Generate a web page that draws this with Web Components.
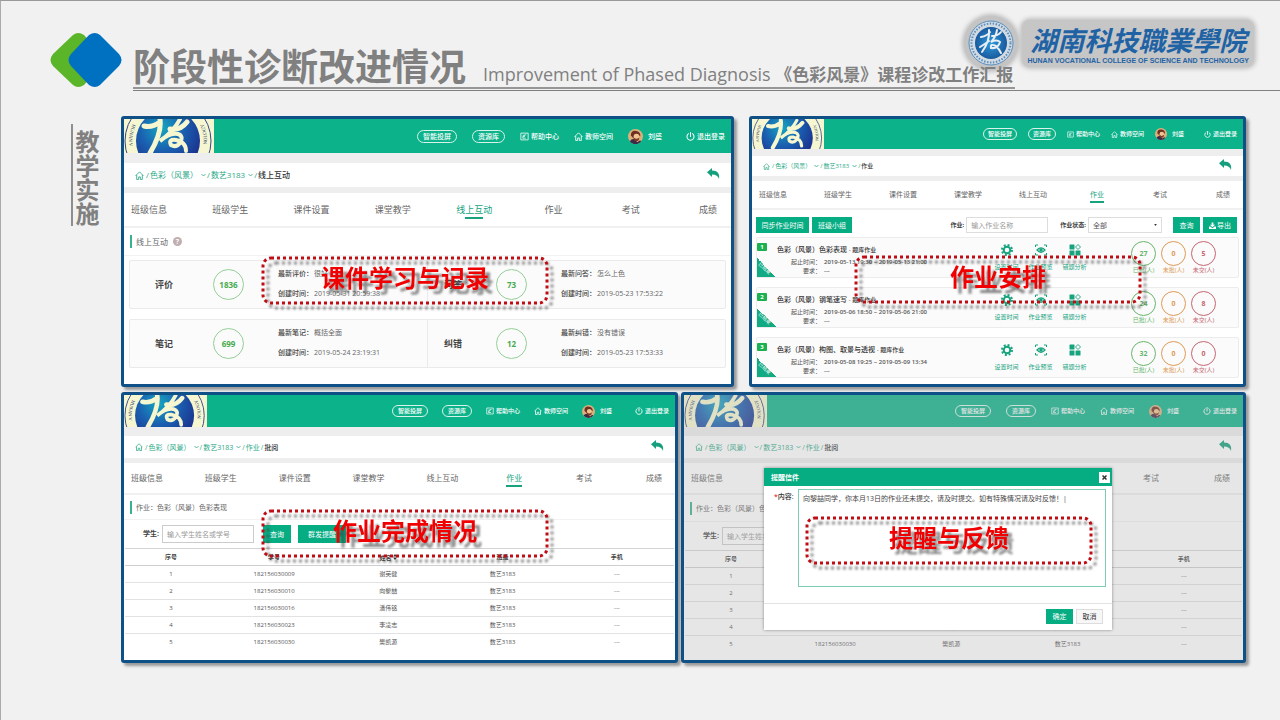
<!DOCTYPE html>
<html lang="zh-CN">
<head>
<meta charset="utf-8">
<title>阶段性诊断改进情况</title>
<style>
  body {
    margin: 0;
    font-family: "Open Sans", "Noto Sans CJK SC", sans-serif;
    color: #555;
    background: #f1f1f1;
  }
</style>
</head>
<body>
<phase-slide></phase-slide>
<script>
const RESET = `
  *, *::before, *::after { box-sizing: border-box; }
  a { color: inherit; text-decoration: none; }
  button, input, select, textarea { font: inherit; color: inherit; margin: 0; padding: 0; border: 0; border-radius: 0; outline: 0; }
  svg { display: block; flex: none; }
`;

function define(name, css, render) {
  customElements.define(name, class extends HTMLElement {
    constructor() {
      super();
      this.attachShadow({ mode: 'open' });
    }
    connectedCallback() {
      const t = document.createElement('template');
      t.innerHTML = `<style>${RESET}${css}</style>${render(this)}`;
      this.shadowRoot.replaceChildren(t.content.cloneNode(true));
    }
  });
}

const HOME = `<svg class="ic" viewBox="0 0 16 16" fill="none" stroke="currentColor" stroke-width="1.5"><path d="M1 8.500 8 1.500l7 7M3 7v8h3.500v-4.500h3V15H13V7"/></svg>`;
const CHEVRON = `<svg class="chev" viewBox="0 0 10 8" fill="none" stroke="currentColor" stroke-width="1.6"><path d="M1 2l4 4 4-4"/></svg>`;

/* ---------- title strip ---------- */

define('brand-mark', `:host { display: block; } svg { width: 72px; height: 56px; }`, () => `
  <svg viewBox="0 0 72 56" aria-hidden="true">
    <path fill="#5ab528" d="M23 3Q28-1 34 3L51 22Q56 28 51 34L34 53Q28 57 23 53L3 34Q-2 28 3 22Z"/>
    <path fill="#0070c0" d="M39 3Q45-1 50 3L69 22Q74 28 69 34L50 53Q45 57 39 53L21 34Q16 28 21 22Z"/>
  </svg>`);

define('college-logo', `
  :host { display: flex; align-items: center; gap: 4px; color: #1f63a5; }
  .seal { width: 54px; height: 54px; border-radius: 50%; background: #c4c4c4; box-shadow: 0 0 4px 2px #bdbdbd; padding: 4px; }
  .seal svg { width: 46px; height: 46px; }
  .name { display: flex; flex-direction: column; align-items: center; padding: 4px 5px 1px; border-radius: 8px; background: #c6c6c6; box-shadow: 0 0 4px 2px #c0c0c0; white-space: nowrap; }
  .zh { font: italic 700 27px/32px "Noto Sans CJK SC", sans-serif; }
  .en { font: 700 7px/10px "Liberation Sans", sans-serif; }
`, () => `
  <div class="seal"><svg viewBox="0 0 46 46" aria-hidden="true">
    <defs><radialGradient id="g"><stop offset="0" stop-color="#2b9bdc"/><stop offset="1" stop-color="#1a5a9e"/></radialGradient></defs>
    <circle cx="23" cy="23" r="22" fill="#d3dbe2" stroke="#5b8fc0" stroke-width="1"/>
    <circle cx="23" cy="23" r="19.500" fill="none" stroke="#5b8fc0" stroke-width="2" stroke-dasharray="1.500 1.500"/>
    <circle cx="23" cy="23" r="16" fill="url(#g)"/>
    <path fill="none" stroke="#e8eef3" stroke-width="2" stroke-linecap="round" d="M13 17q6-1 9-5M21 10q1 11-7 22M12 27q5-3 9-6M24 16q6 0 9-4M29 10q-1 7-6 12q6-3 9 0q-2 7-9 6q-1-5 5-2q3 3 5 7"/>
  </svg></div>
  <div class="name"><span class="zh">湖南科技職業學院</span><span class="en">HUNAN VOCATIONAL COLLEGE OF SCIENCE AND TECHNOLOGY</span></div>`);

define('slide-header', `
  :host { display: flex; position: relative; gap: 11px; padding: 32px 0 0 50px; height: 91px; color: #808080; }
  .rule { flex: 1; display: flex; align-items: flex-end; border-bottom: 1px solid #808080; padding-bottom: 1px; }
  .titles { display: flex; align-items: baseline; gap: 17px; border-bottom: 2px solid #969696; white-space: nowrap; line-height: 24px; position: relative; z-index: 1; padding-right: 2px; }
  h1 { margin: 0; font-size: 37px; font-weight: 700; line-height: 24px; }
  p { margin: 0; font-size: 18px; }
  b { font-size: 17px; }
  college-logo { position: absolute; top: 16px; right: 26px; }
`, () => `
  <brand-mark></brand-mark>
  <div class="rule"><div class="titles"><h1>阶段性诊断改进情况</h1><p>Improvement of Phased Diagnosis <b>《色彩风景》课程诊改工作汇报</b></p></div></div>
  <college-logo></college-logo>`);

define('side-title', `
  :host { display: block; border-left: 2px solid #8e8e8e; padding: 6px 0 0; }
  h2 { margin: 0; writing-mode: vertical-rl; font-size: 24px; line-height: 26px; font-weight: 700; color: #808080; }
`, () => `<h2><slot></slot></h2>`);

/* ---------- screenshot frame ---------- */

define('shot-frame', `
  :host { display: flex; flex-direction: column; position: relative; min-width: 0; min-height: 271px; border: 3px solid #0f5087; border-radius: 3px; background: #fff; box-shadow: 3px 3px 3px #999; line-height: 1; }
  :host([dimmed])::after { content: ""; position: absolute; inset: 0; background: rgba(174, 174, 174, .31); }
`, () => `<slot></slot>`);

define('app-header', `
  :host { display: flex; align-items: center; height: var(--bar-h); background: #0cb38a; color: #fff; font-size: var(--nav-fs); font-weight: 500; padding-right: 6px; }
  .seal { width: var(--seal-w); height: var(--bar-h); margin-right: auto; background: #f6f7d0; }
  nav { display: flex; align-items: center; gap: var(--nav-gap); white-space: nowrap; }
  .pill { border: 1px solid #d8f3ea; border-radius: 9px; padding: 2px var(--pill-pad); }
  a { display: flex; align-items: center; gap: 2px; }
  .ic { width: var(--nav-ic); height: var(--nav-ic); }
  .user { gap: 5px; margin-right: 9px; }
  .face { width: var(--face); height: var(--face); }
`, () => `
  <svg class="seal" viewBox="0 0 90 34" aria-hidden="true">
    <defs>
      <radialGradient id="g" cx=".4" cy=".3" r=".7"><stop offset="0" stop-color="#16a6c0"/><stop offset=".5" stop-color="#1a5fb0"/><stop offset="1" stop-color="#1c2f8c"/></radialGradient>
      <path id="ring" d="M11.800 0A39 39 0 1 0 76.200 0"/>
    </defs>
    <circle cx="44" cy="22" r="43" fill="#f6f7d0" stroke="#31458e" stroke-width="1"/>
    <circle cx="44" cy="22" r="32" fill="url(#g)"/>
    <g font-family="Liberation Serif" font-size="5" fill="#27346f">
      <text><textPath href="#ring" startOffset="6">HUNAN V</textPath></text>
      <text><textPath href="#ring" startOffset="142">NOLOGY</textPath></text>
    </g>
    <g fill="none" stroke="#f6f7d0" stroke-linecap="round">
      <path stroke-width="5" d="M20 7q8 2 16-4M36 0q2 14-10 34M46 10q10 2 17-7"/>
      <path stroke-width="4" d="M56 0q-6 12-20 22q10-9 18-7q6 2 2 9q-4 5-9 2q-3-6 5-5q10 2 10 11"/>
    </g>
  </svg>
  <nav>
    <a class="pill" href="#">智能投屏</a>
    <a class="pill" href="#">资源库</a>
    <a href="#"><svg class="ic" viewBox="0 0 16 16" fill="none" stroke="currentColor" stroke-width="1.4"><path d="M1.500 2h13v12h-13zM5 6h3v2H5v3h5M8 5h3"/></svg>帮助中心</a>
    <a href="#">${HOME}教师空间</a>
    <a class="user" href="#"><svg class="face" viewBox="0 0 16 16"><circle cx="8" cy="8" r="8" fill="#dcb07c"/><path fill="#6f2e22" d="M3 7q0-6 6-5q5 1 4 6l-2-2-4 0-1 4z"/><path fill="#3c2a4a" d="M2 13q2-3 5-2l3 3q3-3 4-1q-2 3-6 3T2 13z"/><circle cx="9" cy="8" r="3" fill="#f0c491"/><path fill="#7b3a24" d="M6 9q3 3 6 0q0 4-3 4T6 9z"/></svg>刘盛</a>
    <a href="#"><svg class="ic" viewBox="0 0 16 16" fill="none" stroke="currentColor" stroke-width="1.8" stroke-linecap="round"><path d="M8 1v7M4.500 3a6.300 6.300 0 1 0 7 0"/></svg>退出登录</a>
  </nav>`);

define('crumb-bar', `
  :host { display: flex; align-items: center; justify-content: space-between; height: var(--crumb-h); margin: var(--gap-a) 0 0; padding: 0 11px; background: #fff; font-size: var(--crumb-fs); color: #2ba987; box-shadow: 0 calc(-1 * var(--gap-a)) 0 #eee; }
  nav { display: flex; align-items: center; gap: 1px; white-space: nowrap; }
  .ic { width: var(--home-ic); height: var(--home-ic); margin-right: 1px; }
  .chev { width: 5px; height: 4px; margin-left: 2px; }
  .now { color: #333; font-weight: 500; }
  button { background: none; color: #14a07c; margin-top: -4px; }
  .back { width: 13px; height: 11px; }
`, el => {
  const trail = (el.getAttribute('trail') || '').split(',').filter(Boolean);
  return `
  <nav aria-label="面包屑"><a href="#">${HOME}</a>/<a href="#">色彩（风景）</a>${CHEVRON}/<a href="#">数艺3183</a>${CHEVRON}/
    ${trail.map(t => `<a href="#">${t}</a>/`).join('')}<span class="now">${el.getAttribute('now')}</span></nav>
  <button type="button" aria-label="返回"><svg class="back" viewBox="0 0 26 22"><path fill="currentColor" d="M0 8.500 10 0v5c11 0 16 6 14 17-2-6-6-9-14-9v5z"/></svg></button>`;
});

define('tab-nav', `
  :host { display: block; border-top: var(--gap-b) solid #eee; border-bottom: 2px solid #f0f0f0; background: #fff; }
  nav { display: flex; justify-content: space-between; align-items: center; height: var(--tab-h); padding: 0 7px; font-size: var(--tab-fs); color: #666; white-space: nowrap; }
  a { position: relative; }
  .short { margin: 0 var(--tab-short); }
  .on { color: #16a37e; }
  .on::after { content: ""; position: absolute; left: 0; right: 0; bottom: -5px; height: 2px; background: #16a37e; }
  .on:not(.short)::after { left: 25%; right: 25%; }
`, el => `<nav>${['班级信息', '班级学生', '课件设置', '课堂教学', '线上互动', '作业', '考试', '成绩'].map(t =>
  `<a href="#" class="${t.length === 2 ? 'short' : ''} ${t === el.getAttribute('active') ? 'on' : ''}">${t}</a>`).join('')}</nav>`);

define('section-title', `
  :host { display: flex; align-items: center; height: var(--sec-h); padding-left: 6px; font-size: var(--crumb-fs); color: #666; white-space: nowrap; border-bottom: 1px solid #f2f2f2; }
  h3 { margin: 0; font-size: inherit; font-weight: 400; border-left: 2px solid #38b292; padding-left: 4px; line-height: 13px; }
  .q { margin-left: 5px; width: 9px; height: 9px; border-radius: 50%; background: #c0aeb0; color: #fff; font-size: 7px; line-height: 9px; font-weight: 700; text-align: center; }
`, el => `<h3><slot></slot></h3>${el.hasAttribute('help') ? '<span class="q">?</span>' : ''}`);

/* ---------- interaction statistics ---------- */

define('stat-card', `
  :host { display: grid; grid-template-columns: 298fr 299fr; height: 49px; margin: 0 5px; border: 1px solid #eaeaea; border-radius: 2px; background: #fbfbfb; font-size: 7px; white-space: nowrap; }
  section { display: flex; align-items: center; padding-left: 25px; }
  section + section { padding-left: 16px; border-left: 1px solid #eaeaea; }
  h4 { margin: 0; width: 58px; font-size: 9px; font-weight: 700; color: #444; }
  section + section h4 { width: 52px; }
  .n { width: 31px; height: 31px; border: 1px solid #95cf98; border-radius: 50%; display: grid; place-items: center; color: #47ab4d; font-weight: 700; font-size: 8px; margin-right: 34px; }
  dl { margin: 0; display: grid; grid-template-columns: 36px auto; row-gap: 12px; line-height: 8px; padding-bottom: 1px; color: #666; }
  dt { font-weight: 500; color: #444; } dd { margin: 0; }
`, el => {
  const half = s => { const [k, n, v, d] = s.split('|');
    return `<section><h4>${k}</h4><span class="n">${n}</span><dl><dt>最新${k}：</dt><dd>${v}</dd><dt>创建时间：</dt><dd>${d}</dd></dl></section>`; };
  return half(el.getAttribute('left')) + half(el.getAttribute('right'));
});

/* ---------- homework list ---------- */

define('work-toolbar', `
  :host { display: flex; align-items: center; height: 16px; margin: 7px 6px 4px 4px; font-size: 7px; white-space: nowrap; }
  button { height: 16px; background: #06ad83; color: #fff; padding: 0 5px; margin-right: 3px; display: flex; align-items: center; justify-content: center; gap: 1px; }
  .wide { width: 53px; } .mid { width: 40px; } .small { width: 27px; } .out { width: 34px; margin-right: 0; }
  label { font-weight: 700; font-size: 6px; color: #444; margin-right: 2px; }
  label:first-of-type { margin-left: auto; }
  input, .pick { height: 16px; border: 1px solid #ddd; background: #fff; padding: 0 4px; }
  input { width: 82px; margin-right: 12px; } input::placeholder { color: #999; opacity: 1; }
  .pick { width: 74px; margin-right: 11px; display: flex; align-items: center; }
  select { flex: 1; appearance: none; background: none; } .pick svg { width: 3px; height: 2px; }
  .dl { width: 7px; height: 7px; }
`, () => `
  <button class="wide" type="button">同步作业时间</button><button class="mid" type="button">班级小组</button>
  <label for="w">作业:</label><input id="w" placeholder="输入作业名称">
  <label for="s">作业状态:</label><span class="pick"><select id="s"><option>全部</option></select><svg viewBox="0 0 4 3"><path d="M0 0h4L2 3z" fill="#333"/></svg></span>
  <button class="small" type="button">查询</button><button class="out" type="button"><svg class="dl" viewBox="0 0 16 16" fill="#fff"><path d="M6 1h4v5h4L8 12 2 6h4zM0 10h3l5 4 5-4h3v6H0z"/></svg>导出</button>`);

define('work-item', `
  :host { display: flex; position: relative; height: 41px; margin: 0 4px 9px; border: 1px solid #ececec; border-radius: 2px; background: #fbfbfb; font-size: 6px; white-space: nowrap; }
  .no { width: 10px; height: 8px; margin-top: 5px; background: #1cb050; border-radius: 1px; color: #fff; font-weight: 700; line-height: 8px; text-align: center; }
  .flag { position: absolute; left: 0; bottom: 0; width: 19px; height: 19px; background: linear-gradient(45deg, #12aa82 50%, transparent 50%); }
  .flag span { position: absolute; left: -2px; top: 8px; width: 19px; text-align: center; font-size: 5px; color: #fff; transform: rotate(45deg); }
  .info { margin: 8px auto 0 10px; }
  h4 { margin: 0 0 4px; font-size: 7px; line-height: 8px; font-weight: 500; color: #333; } h4 small { font-size: 6px; }
  dl { margin: 0; display: grid; grid-template-columns: 44px auto; column-gap: 3px; line-height: 9px; color: #555; }
  dt { text-align: right; } dd { margin: 0; font-weight: 600; }
  .acts { display: flex; gap: 9px; margin: 6px 44px 0 0; color: #16a37e; }
  .acts a { width: 25px; display: flex; flex-direction: column; align-items: center; gap: 8px; }
  .acts svg { width: 12px; height: 12px; }
  .cnt { display: flex; gap: 5px; margin: 3px 22px 0 0; }
  .cnt div { width: 25px; text-align: center; }
  .cnt b { display: block; width: 25px; height: 25px; line-height: 24px; border: 1px solid currentColor; border-radius: 50%; margin-bottom: 1px; font-size: 7px; }
  .g { color: #69b56c; } .o { color: #dd9a55; } .r { color: #c56570; }
`, el => {
  const g = k => el.getAttribute(k);
  return `
  <span class="no">${g('no')}</span><span class="flag"><span>已结束</span></span>
  <div class="info"><h4>${g('name')} <small>- 题库作业</small></h4>
    <dl><dt>起止时间：</dt><dd>${g('time')}</dd><dt>要求：</dt><dd>---</dd></dl></div>
  <div class="acts">
    <a href="#"><svg viewBox="0 0 24 24" fill="none" stroke="currentColor"><circle cx="12" cy="12" r="6.500" stroke-width="4"/><circle cx="12" cy="12" r="10" stroke-width="4" stroke-dasharray="4 3.850"/></svg>设置时间</a>
    <a href="#"><svg viewBox="0 0 24 24" fill="none" stroke="currentColor" stroke-width="2"><path d="M1 6V2h5M18 2h5v4M1 18v4h5M18 22h5v-4"/><path d="M4 12q8-9 16 0q-8 9-16 0z" stroke-width="2.500"/><circle cx="12" cy="12" r="2.500" fill="currentColor"/></svg>作业预览</a>
    <a href="#"><svg viewBox="0 0 24 24" fill="currentColor"><rect x="1" y="1" width="10" height="10" rx="1"/><rect x="1" y="13" width="10" height="10" rx="1"/><rect x="13" y="13" width="10" height="10" rx="1"/><path d="M18 1l5 5-5 5-5-5z" fill="none" stroke="currentColor" stroke-width="1.800"/></svg>错题分析</a>
  </div>
  <div class="cnt"><div class="g"><b>${g('done')}</b>已批(人)</div><div class="o"><b>${g('todo')}</b>未批(人)</div><div class="r"><b>${g('miss')}</b>未交(人)</div></div>`;
});

/* ---------- students ---------- */

define('student-search', `
  :host { display: flex; align-items: center; height: 28px; padding-left: 19px; font-size: 7px; white-space: nowrap; }
  label { font-weight: 700; color: #444; margin: 0 3px 2px 0; }
  input { width: 92px; height: 18px; border: 1px solid #ccc; padding: 0 4px; background: none; margin-right: 9px; }
  input::placeholder { color: #999; opacity: 1; }
  button { height: 18px; width: 28px; background: #06ad83; color: #fff; margin-right: 7px; }
  .w { width: 48px; }
`, () => `<label for="n">学生:</label><input id="n" placeholder="输入学生姓名或学号"><button type="button">查询</button><button class="w" type="button">群发提醒</button>`);

define('student-table', `
  :host { display: block; margin: 0 1px; }
  table { width: 100%; border-collapse: collapse; table-layout: fixed; font-size: 6px; color: #555; text-align: center; border-top: 1px solid #d5d5d5; }
  th, td { padding: 0; height: var(--row-h); border-bottom: 1px solid #e2e2e2; }
  th { font-weight: 700; color: #444; border-color: #cfcfcf; }
  th:first-child { width: 92px; }
  th svg { display: inline-block; width: 4px; height: 6px; }
  tr:last-child td { border-bottom: 0; }
`, () => {
  const rows = [['182156030009', '谢英健'], ['182156030010', '向黎喆'], ['182156030016', '潘伟铭'], ['182156030023', '李凌志'], ['182156030030', '樊凯源']];
  return `<table><thead><tr><th>序号</th><th>学号</th><th>姓名 <svg viewBox="0 0 8 12"><path fill="#333" d="M0 5l4-5 4 5zM0 7h8l-4 5z"/></svg></th><th>班级</th><th>手机</th></tr></thead><tbody>
  ${rows.map((r, i) => `<tr><td>${i + 1}</td><td>${r[0]}</td><td>${r[1]}</td><td>数艺3183</td><td>---</td></tr>`).join('')}</tbody></table>`;
});

define('remind-dialog', `
  :host { display: block; position: absolute; z-index: 2; left: 80px; right: 131px; top: 73px; background: #fff; box-shadow: 0 0 3px rgba(0, 0, 0, .4); font-size: 7px; color: #333; }
  header { display: flex; align-items: center; justify-content: space-between; height: 18px; padding: 0 2px 0 7px; background: #06ad83; color: #fff; font-weight: 700; }
  header button { width: 11px; height: 11px; background: #fff; display: grid; place-items: center; } header svg { width: 5px; height: 5px; }
  .row { display: flex; padding: 3px 6px 16px 10px; border-bottom: 1px solid #e3e3e3; }
  label { width: 24px; padding-top: 4px; font-weight: 500; white-space: nowrap; } i { color: #d00; font-style: normal; }
  textarea { flex: 1; height: 98px; border: 1px solid #7bcdb4; padding: 4px; resize: none; line-height: 9px; overflow: hidden; background: none; color: #444; }
  footer { display: flex; justify-content: flex-end; gap: 3px; padding: 5px 9px 6px; }
  footer button { width: 27px; height: 15px; background: #06ad83; color: #fff; } footer .no { background: #f7f7f7; border: 1px solid #ddd; color: #333; }
`, () => `
  <header>提醒信件<button type="button" aria-label="关闭"><svg viewBox="0 0 10 10" stroke="#333" stroke-width="3"><path d="M1 1l8 8M9 1 1 9"/></svg></button></header>
  <div class="row"><label for="c"><i>*</i>内容:</label><textarea id="c">向黎喆同学，你本月13日的作业还未提交，请及时提交。如有特殊情况请及时反馈！|</textarea></div>
  <footer><button type="button">确定</button><button class="no" type="button">取消</button></footer>`);

/* ---------- red annotation ---------- */

define('call-out', `
  :host { position: absolute; z-index: 3; box-sizing: border-box; width: 288px; height: 49px; display: grid; place-items: center; padding-bottom: 5px; color: #f00000; font-size: 24px; line-height: 44px; font-weight: 700; filter: drop-shadow(5px 5px 1px rgba(60, 60, 60, .6)); }
  svg { position: absolute; inset: 0; width: 100%; height: 100%; overflow: visible; }
  rect { x: 2px; y: 2px; width: calc(100% - 4px); height: calc(100% - 4px); fill: none; stroke: #c00d14; stroke-width: 3px; stroke-dasharray: 3 3; }
`, () => `<svg aria-hidden="true"><rect rx="8"/></svg><span><slot></slot></span>`);

/* ---------- whole slide ---------- */

define('phase-slide', `
  :host { display: block; min-height: 100vh; border-top: 1px solid #999; border-left: 1px solid #aaa; background: #f1f1f1; box-sizing: border-box; }
  slide-header { margin-left: -1px; margin-top: -1px; }
  main { display: grid; grid-template-columns: 50px 1fr; padding: 25px 34px 56px 70px; }
  side-title { margin-top: 8px; height: 102px; justify-self: start; }
  .rows { display: grid; gap: 5px; min-width: 0; }
  .r1 { display: grid; grid-template-columns: 613fr 497fr; gap: 15px; }
  .r2 { display: grid; grid-template-columns: 557fr 565fr; gap: 3px; }
  .a { --bar-h: 34px; --seal-w: 90px; --nav-fs: 7px; --nav-gap: 15px; --pill-pad: 5px; --nav-ic: 9px; --face: 15px; --gap-a: 10px; --gap-b: 6px; --crumb-h: 24px; --crumb-fs: 8px; --home-ic: 9px; --tab-h: 33px; --tab-fs: 9px; --tab-short: 7px; --sec-h: 28px; }
  .a stat-card { margin-top: 4px; } .a stat-card + stat-card { margin-top: 10px; }
  .b { --bar-h: 30px; --seal-w: 72px; --nav-fs: 6px; --nav-gap: 11px; --pill-pad: 4px; --nav-ic: 7px; --face: 12px; --gap-a: 7px; --gap-b: 5px; --crumb-h: 20px; --crumb-fs: 6px; --home-ic: 7px; --tab-h: 27px; --tab-fs: 7px; --tab-short: 6px; }
  .c, .d { --bar-h: 32px; --seal-w: 83px; --nav-fs: 6px; --nav-gap: 14px; --pill-pad: 5px; --nav-ic: 8px; --face: 13px; --gap-a: 9px; --gap-b: 5px; --crumb-h: 22px; --crumb-fs: 7px; --home-ic: 8px; --tab-h: 30px; --tab-fs: 8px; --tab-short: 6px; --sec-h: 25px; --row-h: 17px; }
  .d { --sec-h: 27px; --nav-gap: 15px; }
  .a call-out { left: 137px; top: 137px; }
  .b call-out { left: 102px; top: 136px; }
  .c call-out { left: 137px; top: 114px; }
  .d call-out { left: 121px; top: 121px; }
`, () => `
  <slide-header></slide-header>
  <main>
    <side-title>教学实施</side-title>
    <div class="rows">
      <div class="r1">
        <shot-frame class="a">
          <app-header></app-header><crumb-bar now="线上互动"></crumb-bar><tab-nav active="线上互动"></tab-nav>
          <section-title help>线上互动</section-title>
          <stat-card left="评价|1836|很好|2019-05-31 20:59:38" right="问答|73|怎么上色|2019-05-23 17:53:22"></stat-card>
          <stat-card left="笔记|699|概括全面|2019-05-24 23:19:31" right="纠错|12|没有错误|2019-05-23 17:53:33"></stat-card>
          <call-out>课件学习与记录</call-out>
        </shot-frame>
        <shot-frame class="b">
          <app-header></app-header><crumb-bar now="作业"></crumb-bar><tab-nav active="作业"></tab-nav>
          <work-toolbar></work-toolbar>
          <work-item no="1" name="色彩（风景）色彩表现" time="2019-05-13 19:30 ~ 2019-05-13 21:00" done="27" todo="0" miss="5"></work-item>
          <work-item no="2" name="色彩（风景）钢笔速写" time="2019-05-06 18:50 ~ 2019-05-06 21:00" done="24" todo="0" miss="8"></work-item>
          <work-item no="3" name="色彩（风景）构图、取景与透视" time="2019-05-08 19:25 ~ 2019-05-09 13:34" done="32" todo="0" miss="0" style="margin-bottom:0"></work-item>
          <call-out>作业安排</call-out>
        </shot-frame>
      </div>
      <div class="r2">
        <shot-frame class="c">
          <app-header></app-header><crumb-bar trail="作业" now="批阅"></crumb-bar><tab-nav active="作业"></tab-nav>
          <section-title>作业：色彩（风景）色彩表现</section-title><student-search></student-search><student-table></student-table>
          <call-out>作业完成情况</call-out>
        </shot-frame>
        <shot-frame class="d" dimmed>
          <app-header></app-header><crumb-bar trail="作业" now="批阅"></crumb-bar><tab-nav active="作业"></tab-nav>
          <section-title>作业：色彩（风景）色彩表现</section-title><student-search></student-search><student-table></student-table>
          <remind-dialog></remind-dialog>
          <call-out>提醒与反馈</call-out>
        </shot-frame>
      </div>
    </div>
  </main>`);
</script>
</body>
</html>
